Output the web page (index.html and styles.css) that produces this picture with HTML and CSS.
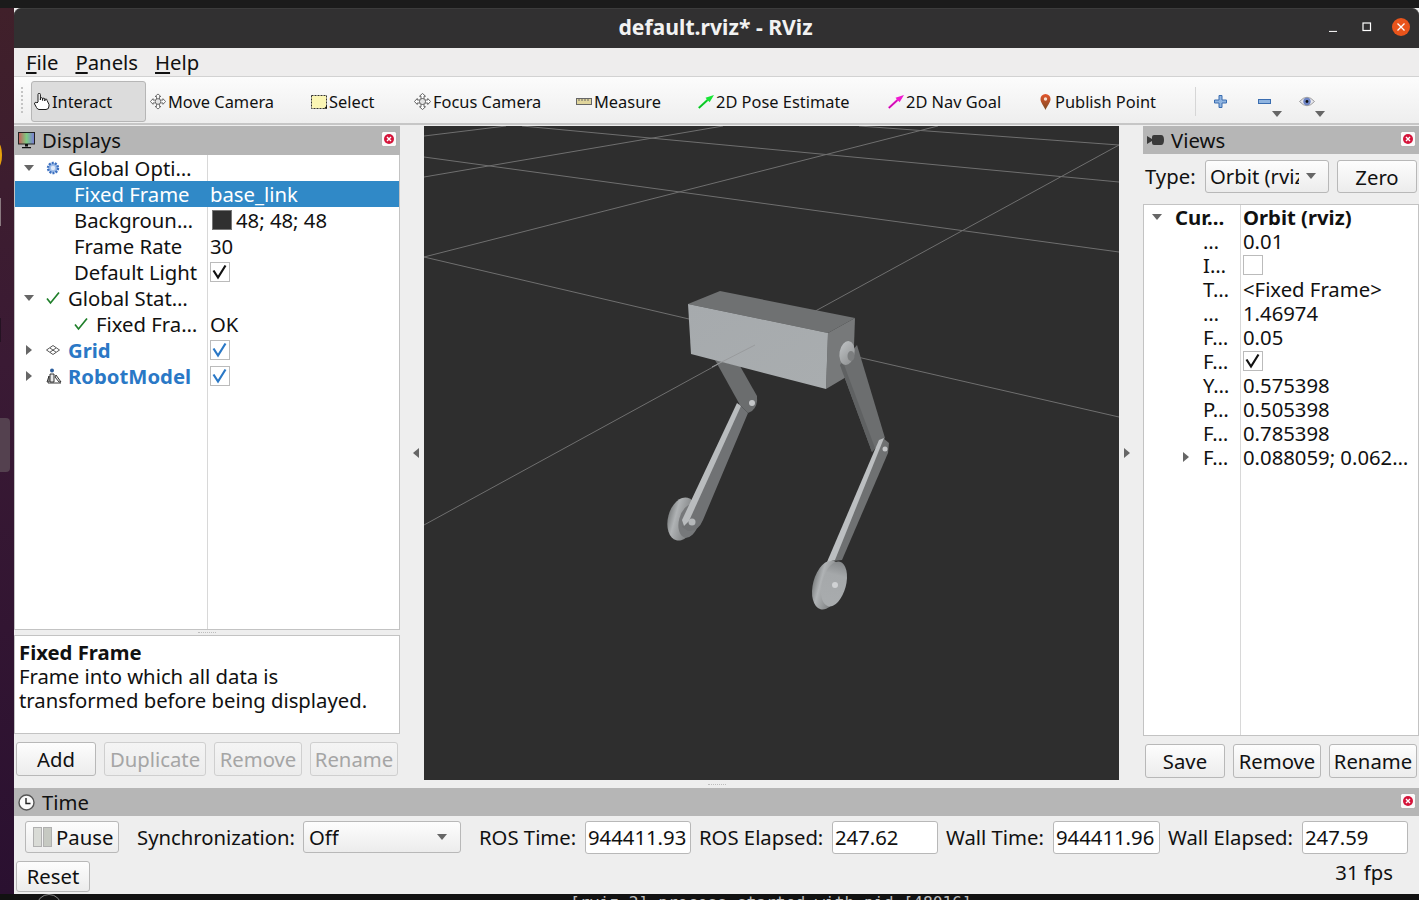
FILE: index.html
```html
<!DOCTYPE html>
<html lang="en">
<head>
<meta charset="utf-8">
<title>default.rviz* - RViz</title>
<link rel="stylesheet" href="styles.css">
</head>
<body>
<svg class="defs" width="0" height="0" aria-hidden="true">
  <defs>
    <symbol id="close" viewBox="0 0 16 16">
      <rect x="0.5" y="0.5" width="15" height="15" rx="2" fill="#fafafa" stroke="#9a9a9a" stroke-width="0.6"/>
      <circle cx="8" cy="8" r="5" fill="#d5143a"/>
      <path d="M6 6l4 4M10 6l-4 4" stroke="#fff" stroke-width="1.4"/>
    </symbol>
    <symbol id="tick" viewBox="0 0 20 20">
      <path d="M3.500 8.500L8 15.500L15.500 3.500" fill="none" stroke="currentColor" stroke-width="2.200"/>
    </symbol>
    <symbol id="greencheck" viewBox="0 0 14 14">
      <path d="M1 7.500l3.500 4.500L13 1.500" fill="none" stroke="#1f7f2a" stroke-width="1.700"/>
    </symbol>
    <symbol id="crosshair" viewBox="0 0 17 17">
      <path d="M8.500 .5l3 2.700H10v2.800H7V3.200H5.500zM8.500 16.500l3-2.700H10v-2.800H7v2.800H5.500zM.5 8.500l2.700-3V7H6v3H3.200v1.500zM16.500 8.500l-2.700-3V7H11v3h2.800v1.500z" fill="#fff" stroke="#444" stroke-width=".8"/>
      <circle cx="8.500" cy="8.500" r="3" fill="#e4e4e4" stroke="#555" stroke-width=".8"/>
    </symbol>
  </defs>
</svg>

<div class="desktop">
  <div class="topstrip"></div>
  <div class="middle">
    <aside class="launcher">
      <span class="dock-a"></span><span class="dock-b"></span><span class="dock-c"></span><span class="dock-d"></span>
    </aside>
    <div class="window">
      <header class="titlebar">
        <span class="title">default.rviz* - RViz</span>
        <div class="wm">
          <svg class="wm-min" width="10" height="10" viewBox="0 0 10 10"><path d="M1 9.500h8" stroke="#eee" stroke-width="1.200"/></svg>
          <svg class="wm-max" width="10" height="10" viewBox="0 0 10 10"><rect x="1" y="1" width="7.500" height="7.500" fill="none" stroke="#fff" stroke-width="1.200"/></svg>
          <svg class="wm-close" width="18" height="18" viewBox="0 0 18 18"><circle cx="9" cy="9" r="9" fill="#e9541b"/><path d="M5.500 5.500l7 7M12.500 5.500l-7 7" stroke="#fff" stroke-width="1.300"/></svg>
        </div>
      </header>

      <nav class="menubar">
        <span class="menu"><u>F</u>ile</span>
        <span class="menu"><u>P</u>anels</span>
        <span class="menu"><u>H</u>elp</span>
      </nav>

      <div class="toolbar">
        <span class="grip"></span>
        <div class="tools">
          <div class="tool active">
            <svg width="16" height="17" viewBox="0 0 16 17"><path d="M4 9V1.500a1.200 1.200 0 0 1 2.400 0V7V5.800a1.100 1.100 0 0 1 2.200 0V7.500V6.300a1.100 1.100 0 0 1 2.200 0V8V7a1.100 1.100 0 0 1 2.200 0.300L15 11.500V13q0 3.500-3 3.500H5q-1.500 0-2.500-2L.6 11c-.6-1.500 1.400-2.500 2.400-1z" fill="#fff" stroke="#1a1a1a" stroke-width="1"/></svg>
            <span>Interact</span>
          </div>
          <div class="tool"><svg width="16" height="17"><use href="#crosshair"/></svg><span>Move Camera</span></div>
          <div class="tool">
            <svg width="16" height="14" viewBox="0 0 16 14"><rect x=".5" y=".5" width="15" height="13" fill="#fbf6b4" stroke="#333" stroke-dasharray="2 1"/><path d="M13 13.500h3v-3z" fill="#111"/></svg>
            <span>Select</span>
          </div>
          <div class="tool"><svg width="17" height="17"><use href="#crosshair"/></svg><span>Focus Camera</span></div>
          <div class="tool">
            <svg width="16" height="7" viewBox="0 0 16 7"><rect x=".5" y=".5" width="15" height="6" fill="#e0d59c" stroke="#666"/><path d="M3 1v2M6 1v2M9 1v2M12 1v2" stroke="#666"/></svg>
            <span>Measure</span>
          </div>
          <div class="tool">
            <svg width="16" height="14" viewBox="0 0 16 14"><path d="M16 0L7.500 2.800l1.300 1.500L0 12.200l1.500 1.500 8.800-7.900 1.300 1.500z" fill="#16e534"/><path d="M1 13L9 5.500" stroke="#0a8a1c" stroke-width=".7"/></svg>
            <span>2D Pose Estimate</span>
          </div>
          <div class="tool">
            <svg width="16" height="14" viewBox="0 0 16 14"><path d="M16 0L7.500 2.800l1.300 1.500L0 12.200l1.500 1.500 8.800-7.900 1.300 1.500z" fill="#f01ad0"/><path d="M1 13L9 5.500" stroke="#9a0a88" stroke-width=".7"/></svg>
            <span>2D Nav Goal</span>
          </div>
          <div class="tool pin">
            <svg width="11" height="16" viewBox="0 0 11 16"><defs><linearGradient id="pinfill" x1="0" y1="0" x2="0" y2="1"><stop offset="0" stop-color="#e4552c"/><stop offset="1" stop-color="#7a4a22"/></linearGradient></defs><path d="M5.500 0a5 5 0 0 1 5 5.200C10.500 8.500 7 12 5.500 16 4 12 .5 8.500.5 5.200a5 5 0 0 1 5-5.200z" fill="url(#pinfill)"/><circle cx="5.500" cy="5" r="1.700" fill="#f6e0d0"/></svg>
            <span>Publish Point</span>
          </div>
        </div>
        <span class="sep"></span>
        <div class="actions">
          <svg class="act-plus" width="13" height="13" viewBox="0 0 13 13"><path d="M5 .5h3v4.500h4.500v3H8v4.500H5V8H.5V5H5z" fill="#8fb4e0" stroke="#3a6db0"/></svg>
          <svg class="act-minus" width="13" height="5" viewBox="0 0 13 5"><rect x=".5" y=".5" width="12" height="4" fill="#8fb4e0" stroke="#3a6db0"/></svg>
          <span class="arrow-down act-a1"></span>
          <svg class="act-eye" width="16" height="11" viewBox="0 0 16 11"><path d="M.5 5.500Q8-3 15.500 5.500Q8 14 .5 5.500z" fill="#e8e8ee" stroke="#888" stroke-width=".8"/><circle cx="8" cy="5.500" r="3.700" fill="#6d84c4"/><circle cx="8" cy="5.500" r="1.400" fill="#111"/></svg>
          <span class="arrow-down act-a2"></span>
        </div>
      </div>

      <main class="workspace">
        <section class="displays">
          <div class="dock-title">
            <svg width="17" height="17" viewBox="0 0 17 17"><defs><linearGradient id="rainbow" x1="0" y1="0" x2="1" y2="0"><stop offset="0" stop-color="#c85a5a"/><stop offset=".5" stop-color="#7ecb82"/><stop offset="1" stop-color="#7a7ad8"/></linearGradient></defs><rect x=".5" y=".5" width="16" height="11.500" fill="url(#rainbow)" stroke="#222"/><path d="M7 12h3v2.500H7zM4 15h9v1.200H4z" fill="#111"/></svg>
            <span class="dock-name">Displays</span>
            <svg class="dock-close" width="16" height="16"><use href="#close"/></svg>
          </div>
          <div class="tree disp-tree">
            <div class="row"><div class="name"><span class="arrow-down twist"></span>
              <svg class="ico" width="14" height="14" viewBox="0 0 14 14"><circle cx="7" cy="7" r="5" fill="#9dbce8" stroke="#3c70c0" stroke-width="2.400" stroke-dasharray="2 1.100"/><circle cx="7" cy="7" r="2.200" fill="#dfe9f8"/></svg>
              <span>Global Opti…</span></div><div class="val"></div></div>
            <div class="row selected"><div class="name lvl2">Fixed Frame</div><div class="val">base_link</div></div>
            <div class="row"><div class="name lvl2">Backgroun…</div><div class="val"><i class="swatch"></i>48; 48; 48</div></div>
            <div class="row"><div class="name lvl2">Frame Rate</div><div class="val">30</div></div>
            <div class="row"><div class="name lvl2">Default Light</div><div class="val"><span class="check"><svg width="20" height="20"><use href="#tick"/></svg></span></div></div>
            <div class="row"><div class="name"><span class="arrow-down twist"></span>
              <svg class="ico" width="14" height="14"><use href="#greencheck"/></svg>
              <span>Global Stat…</span></div><div class="val"></div></div>
            <div class="row"><div class="name lvl2b"><svg class="ico" width="14" height="14"><use href="#greencheck"/></svg><span>Fixed Fra…</span></div><div class="val">OK</div></div>
            <div class="row"><div class="name"><span class="arrow-right twist-r"></span>
              <svg class="ico" width="14" height="10" viewBox="0 0 14 10"><path d="M7 .5L13.500 5 7 9.500.5 5zM4 3l6 4.200M10 3L4 7.200" fill="#fff" stroke="#444" stroke-width=".9"/></svg>
              <b class="link">Grid</b></div><div class="val"><span class="check on"><svg width="20" height="20"><use href="#tick"/></svg></span></div></div>
            <div class="row"><div class="name"><span class="arrow-right twist-r"></span>
              <svg class="ico ico-wide" width="16" height="16" viewBox="0 0 16 16"><circle cx="6" cy="2.500" r="2" fill="#2b5d9c"/><path d="M4 6h4v8H4zM1 14l2-6v6zM9 9l4 5h2l-5-7zM2 15h13" fill="#e8e8e8" stroke="#222" stroke-width=".9"/></svg>
              <b class="link">RobotModel</b></div><div class="val"><span class="check on"><svg width="20" height="20"><use href="#tick"/></svg></span></div></div>
            <div class="row filler"><div class="name"></div><div class="val"></div></div>
          </div>
          <div class="handle"><span class="dots"></span></div>
          <div class="help">
            <b>Fixed Frame</b>
            <span>Frame into which all data is</span>
            <span>transformed before being displayed.</span>
          </div>
          <div class="btn-row disp-btns">
            <button class="btn w-add">Add</button>
            <button class="btn w-dup" disabled>Duplicate</button>
            <button class="btn w-rem" disabled>Remove</button>
            <button class="btn w-ren" disabled>Rename</button>
          </div>
        </section>

        <div class="splitter split-l"><span class="arrow-left"></span></div>

        <section class="center">
          <div class="viewport">
            <svg class="scene" width="695" height="654" viewBox="424 126 695 654" role="img" aria-label="3D view of a two-legged robot on a grid">
              <defs>
                <linearGradient id="frontface" x1="0" y1="0" x2="1" y2="1"><stop offset="0" stop-color="#a6aaad"/><stop offset="1" stop-color="#a9adaf"/></linearGradient>
                <linearGradient id="rimL" x1="0" y1="0" x2="1" y2="0"><stop offset="0" stop-color="#7f8283"/><stop offset=".25" stop-color="#b0b3b5"/><stop offset="1" stop-color="#6b6d6e"/></linearGradient>
                <linearGradient id="hubG" x1="0" y1="0" x2="1" y2="1"><stop offset="0" stop-color="#c0c3c5"/><stop offset="1" stop-color="#8d8f90"/></linearGradient>
                <linearGradient id="faceR" x1="0" y1="0" x2="0" y2="1"><stop offset="0" stop-color="#85888a"/><stop offset=".3" stop-color="#a5a8aa"/><stop offset="1" stop-color="#a9acae"/></linearGradient>
              </defs>
              <g class="grid-lines">
                <path d="M424 136L506 126"/>
                <path d="M424 177L723 126"/>
                <path d="M424 257L938 126"/>
                <path d="M424 525L1119 145"/>
                <path d="M522 126L1119 182"/>
                <path d="M859 126L1119 145"/>
                <path d="M424 157L1119 252"/>
                <path d="M424 257L689 319"/>
                <path d="M853 356L1119 417"/>
              </g>
              <!-- left leg -->
              <ellipse cx="682" cy="519" rx="14" ry="22" transform="rotate(15 682 519)" fill="url(#rimL)"/>
              <ellipse cx="689" cy="521" rx="10" ry="17" transform="rotate(15 689 521)" fill="#76787a"/>
              <path d="M739 404L748 413L703 520Q698 532 688 531L682 527Z" fill="#707274"/>
              <path d="M737 403L741 406L689 521L684 526L682 520Z" fill="#b9bcbe"/>
              <circle cx="692" cy="522" r="3.500" fill="#b5b8ba"/>
              <path d="M715 360L740 366L757 396Q758 406 752 411L748 413L740 405Z" fill="#6b6d6e"/>
              <circle cx="752" cy="403" r="3" fill="#c4c6c8"/>
              <!-- body -->
              <path d="M688 304L720 291L855 318L828 333Z" fill="#6f7172"/>
              <path d="M828 333L855 318L853 373L826 389Z" fill="#77797a"/>
              <path d="M688 304L828 333L826 389L691 354Z" fill="url(#frontface)"/>
              <path d="M712 367L755 345" stroke="#999b9d" stroke-width="1" fill="none"/>
              <!-- right leg -->
              <path d="M840 365L857 345L885 438L872 452Z" fill="#6c6e6f"/>
              <path d="M840 365L843 362L875 448L872 452Z" fill="#5f6162"/>
              <ellipse cx="847" cy="353" rx="7.500" ry="12" transform="rotate(10 847 353)" fill="url(#hubG)"/>
              <ellipse cx="851" cy="356" rx="3.500" ry="5" fill="#7c7e7f"/>
              <ellipse cx="827" cy="585" rx="14" ry="25" transform="rotate(15 827 585)" fill="url(#rimL)"/>
              <ellipse cx="834" cy="584" rx="12" ry="23" transform="rotate(15 834 584)" fill="url(#faceR)"/>
              <path d="M883 438L889 443L888 453L842 560L833 561Z" fill="#6f7172"/>
              <path d="M879 440L884 438L835 560L827 562Z" fill="#bcbfc1"/>
              <circle cx="885" cy="449" r="2.500" fill="#c4c6c8"/>
              <circle cx="835" cy="585" r="3" fill="#d0d2d4"/>
            </svg>
          </div>
          <div class="handle center-handle"><span class="dots"></span></div>
        </section>

        <div class="splitter split-r"><span class="arrow-right"></span></div>

        <section class="views">
          <div class="dock-title views-title">
            <svg width="17" height="10" viewBox="0 0 17 10"><path d="M0 1l5 3V2q0-2 2-2h7q3 0 3 5t-3 5H7q-2 0-2-2V6L0 9z" fill="#3a3a3a"/></svg>
            <span class="dock-name">Views</span>
            <svg class="dock-close" width="16" height="16"><use href="#close"/></svg>
          </div>
          <div class="type-row">
            <label class="type-label">Type:</label>
            <div class="combo type-combo"><span class="combo-text">Orbit (rviz)</span><span class="arrow-down"></span></div>
            <button class="btn zero">Zero</button>
          </div>
          <div class="tree view-tree">
            <div class="vrow"><div class="vname strong"><span class="arrow-down vtwist"></span>Cur…</div><div class="vval strong">Orbit (rviz)</div></div>
            <div class="vrow"><div class="vname">…</div><div class="vval">0.01</div></div>
            <div class="vrow"><div class="vname">I…</div><div class="vval"><span class="check"></span></div></div>
            <div class="vrow"><div class="vname">T…</div><div class="vval">&lt;Fixed Frame&gt;</div></div>
            <div class="vrow"><div class="vname">…</div><div class="vval">1.46974</div></div>
            <div class="vrow"><div class="vname">F…</div><div class="vval">0.05</div></div>
            <div class="vrow"><div class="vname">F…</div><div class="vval"><span class="check"><svg width="20" height="20"><use href="#tick"/></svg></span></div></div>
            <div class="vrow"><div class="vname">Y…</div><div class="vval">0.575398</div></div>
            <div class="vrow"><div class="vname">P…</div><div class="vval">0.505398</div></div>
            <div class="vrow"><div class="vname">F…</div><div class="vval">0.785398</div></div>
            <div class="vrow"><div class="vname"><span class="arrow-right vtwist-r"></span>F…</div><div class="vval">0.088059; 0.062…</div></div>
            <div class="vrow filler"><div class="vname"></div><div class="vval"></div></div>
          </div>
          <div class="btn-row view-btns">
            <button class="btn w-save">Save</button>
            <button class="btn w-rem2">Remove</button>
            <button class="btn w-ren2">Rename</button>
          </div>
        </section>
      </main>

      <section class="timepanel">
        <div class="dock-title time-title">
          <svg width="17" height="17" viewBox="0 0 17 17"><circle cx="8.500" cy="8.500" r="7.500" fill="#fafafa" stroke="#555" stroke-width="1.400"/><path d="M8 4v5.500h4.500" fill="none" stroke="#222" stroke-width="1.400"/></svg>
          <span class="dock-name">Time</span>
          <svg class="dock-close" width="16" height="16"><use href="#close"/></svg>
        </div>
        <div class="time-row">
          <button class="btn pause"><svg width="19" height="20" viewBox="0 0 19 20"><rect x=".5" y=".5" width="8" height="19" fill="#d9dbd6" stroke="#b0b0b0"/><rect x="10.500" y=".5" width="8" height="19" fill="#c6c9c2" stroke="#b0b0b0"/></svg><span>Pause</span></button>
          <span class="tlabel sync">Synchronization:</span>
          <div class="combo time-combo"><span class="combo-text">Off</span><span class="arrow-down"></span></div>
          <span class="tlabel sync">ROS Time:</span>
          <div class="field">944411.93</div>
          <span class="tlabel">ROS Elapsed:</span>
          <div class="field">247.62</div>
          <span class="tlabel">Wall Time:</span>
          <div class="field">944411.96</div>
          <span class="tlabel">Wall Elapsed:</span>
          <div class="field">247.59</div>
        </div>
        <div class="status-row">
          <button class="btn reset">Reset</button>
          <span class="fps">31 fps</span>
        </div>
      </section>
    </div>
  </div>
  <div class="terminal"><span class="term-ring"></span><span class="term-text">[rviz-2] process started with pid [48016]</span></div>
</div>
</body>
</html>
```

FILE: styles.css
```css
* { box-sizing: border-box; }
html, body { margin: 0; padding: 0; }
body {
  width: 1419px;
  height: 900px;
  overflow: hidden;
  background: #111;
  font-family: "Noto Sans", "Open Sans", sans-serif;
  font-size: 20.300px;
  color: #111;
}
.defs { position: absolute; }
.desktop { display: flex; flex-direction: column; height: 900px; position: relative; }
.topstrip { height: 8px; background: #1b1b1b; }
.middle { display: flex; height: 886px; }

.launcher {
  width: 14px;
  position: relative;
  background: linear-gradient(180deg, #40202a 0%, #3a1a34 40%, #2a1030 100%);
}
.dock-a { position: absolute; left: -6px; top: 135px; width: 8px; height: 24px; border-radius: 50%; background: #e8a20c; }
.dock-b { position: absolute; left: 0; top: 190px; width: 1px; height: 28px; background: #8a7a80; }
.dock-c { position: absolute; left: 0; top: 310px; width: 1px; height: 24px; background: #241222; }
.dock-d { position: absolute; left: 0; top: 410px; width: 10px; height: 54px; border-radius: 0 4px 4px 0; background: #54414f; }

.window { flex: 1; display: flex; flex-direction: column; background: #eeeeee; min-width: 0; }

.titlebar {
  height: 40px;
  background: #313031;
  border-top: 1px solid #3c3c3c;
  border-radius: 7px 7px 0 0;
  display: flex;
  align-items: center;
  justify-content: center;
  position: relative;
  flex: none;
}
.title { color: #f2f2f2; font-weight: 700; font-size: 21.200px; line-height: 36px; margin: -4px 2px 0 0; }
.wm { position: absolute; right: 9px; top: 9px; display: flex; align-items: center; }
.wm-min { margin-right: 24px; }
.wm-max { margin-right: 20px; }

.menubar { height: 28px; background: #eeeded; display: flex; align-items: center; padding: 0 0 0 12px; gap: 17px; flex: none; }
.menu { line-height: 26px; }

.toolbar {
  height: 49px;
  border-top: 1px solid #d2d2d2;
  border-bottom: 2px solid #c6c6c6;
  background: linear-gradient(180deg, #fcfcfc, #eeeeee);
  display: flex;
  align-items: flex-start;
  font-size: 16.400px;
  flex: none;
}
.grip { width: 2px; height: 26px; margin: 10px 8px 0 7px; border-left: 2px dotted #c4c4c4; }
.tools {
  display: grid;
  grid-template-columns: 115px 164px 103px 162px 122px 190px 152px 156px;
  height: 41px;
  margin-top: 4px;
}
.tool { display: flex; align-items: center; gap: 2px; padding-left: 4px; white-space: nowrap; height: 41px; }
.tool.active { background: #dcdcdc; border: 1px solid #b6b6b6; border-radius: 3px; padding-left: 2px; }
.tool svg { flex: none; }
.tool:nth-child(3), .tool:nth-child(4), .tool:nth-child(5), .tool:nth-child(6), .tool:nth-child(7) { padding-left: 1px; }
.tool.pin { gap: 4px; padding-left: 1px; }
.sep { width: 1px; height: 29px; background: #d6d6d6; margin-top: 10px; }
.actions { position: relative; flex: 1; height: 41px; margin-top: 4px; }
.act-plus { position: absolute; left: 18px; top: 14px; }
.act-minus { position: absolute; left: 62px; top: 18px; }
.act-eye { position: absolute; left: 103px; top: 15px; }
.act-a1 { position: absolute; left: 76px; top: 30px; }
.act-a2 { position: absolute; left: 119px; top: 30px; }

.arrow-down { display: inline-block; width: 0; height: 0; border-left: 5.500px solid transparent; border-right: 5.500px solid transparent; border-top: 6px solid #666; flex: none; }
.arrow-right { display: inline-block; width: 0; height: 0; border-top: 5.500px solid transparent; border-bottom: 5.500px solid transparent; border-left: 6px solid #666; }
.arrow-left { display: inline-block; width: 0; height: 0; border-top: 5.500px solid transparent; border-bottom: 5.500px solid transparent; border-right: 6px solid #666; }

.workspace { height: 663px; display: flex; padding-top: 1px; flex: none; }
.displays { width: 386px; display: flex; flex-direction: column; }
.center { width: 695px; display: flex; flex-direction: column; }
.views { flex: 1; display: flex; flex-direction: column; min-width: 0; }

.splitter { width: 24px; height: 654px; display: flex; align-items: center; justify-content: center; }
.split-l { padding-left: 8px; }
.split-r { padding-right: 8px; }
.viewport { height: 654px; background: #2e2e2e; }
.scene { display: block; }
.grid-lines path { stroke: #6f6f6f; stroke-width: 1; fill: none; }

.dock-title { height: 29px; background: #b6b6b6; display: flex; align-items: center; padding-left: 4px; position: relative; flex: none; }
.views-title { height: 28px; padding-left: 4px; }
.time-title { height: 28px; }
.dock-name { margin-left: 7px; line-height: 29px; }
.dock-close { position: absolute; right: 3px; top: 5px; }

.tree { background: #fff; border: 1px solid #c3c3c3; display: flex; flex-direction: column; }
.disp-tree { height: 475px; border-top: 0; }
.row { height: 26px; display: grid; grid-template-columns: 193px 1fr; line-height: 26px; flex: none; white-space: nowrap; }
.row.filler { flex: 1; }
.row.selected { background: #3089c7; color: #fff; }
.name { display: flex; align-items: center; padding-left: 9px; border-right: 1px solid #d8d8d8; position: relative; height: 100%; }
.row.selected .name { border-right-color: #3089c7; }
.lvl2 { padding-left: 59px; }
.lvl2b { padding-left: 59px; }
.twist { margin-right: 12px; }
.twist-r { flex: none; margin-left: 2px; margin-right: 14px; }
.ico { flex: none; margin-right: 8px; }
.ico-wide { margin-right: 6px; }
.val { padding-left: 2px; display: flex; align-items: center; }
.link { color: #2a78c6; font-weight: 700; }
.swatch { display: inline-block; width: 20px; height: 20px; background: #303030; border: 1px solid #777; margin: 0 4px 0 2px; }
.check { display: block; width: 20px; height: 20px; background: #fff; border: 1px solid #bbb; color: #111; flex: none; }
.check svg { display: block; margin: -1px; }
.check.on { color: #2a78c6; }

.handle { height: 5px; display: flex; align-items: center; justify-content: center; flex: none; }
.dots { width: 18px; border-top: 1px dotted #bdbdbd; }
.center-handle { height: 8px; justify-content: flex-start; padding-left: 284px; }
.help { height: 99px; background: #fff; border: 1px solid #c3c3c3; padding: 4px 4px; display: flex; flex-direction: column; line-height: 24px; white-space: nowrap; flex: none; }
.btn-row { display: flex; flex: none; }
.disp-btns { margin-top: 8px; margin-left: 2px; gap: 8px; }
.view-btns { margin-top: 8px; margin-left: 2px; gap: 8px; }
.btn {
  height: 34px;
  padding: 0;
  border: 1px solid #b8b8b8;
  border-radius: 3px;
  background: linear-gradient(180deg, #fdfdfd, #ececec);
  font: inherit;
  color: #111;
  white-space: nowrap;
}
.btn[disabled] { color: #a5a5a5; border-color: #cfcfcf; background: linear-gradient(180deg, #f4f4f4, #ececec); }
.w-add { width: 80px; }
.w-dup { width: 102px; }
.w-rem { width: 88px; }
.w-ren { width: 88px; }
.w-save { width: 80px; }
.w-rem2 { width: 88px; }
.w-ren2 { width: 88px; }

.type-row { height: 50px; padding: 6px 0 11px 2px; display: flex; flex: none; align-items: stretch; }
.type-label { width: 60px; line-height: 33px; }
.combo {
  border: 1px solid #b8b8b8;
  border-radius: 3px;
  background: linear-gradient(180deg, #fdfdfd, #ececec);
  display: flex;
  align-items: center;
  justify-content: space-between;
  padding: 0 13px 0 5px;
  height: 32px;
}
.combo-text { white-space: nowrap; overflow: hidden; }
.time-combo { padding-bottom: 1px; }
.type-combo { width: 124px; height: 33px; padding: 0 12px 2px 4px; }
.type-combo .combo-text { width: 89px; }
.zero { width: 80px; height: 33px; margin-left: 8px; }

.view-tree { height: 532px; }
.vrow { height: 24px; display: grid; grid-template-columns: 97px 1fr; line-height: 24px; flex: none; white-space: nowrap; }
.vrow.filler { flex: 1; }
.vname { padding-left: 59px; border-right: 1px solid #d8d8d8; position: relative; height: 100%; }
.vname.strong { padding-left: 31px; }
.strong { font-weight: 700; }
.vval { padding-left: 2px; display: flex; align-items: center; }
.vtwist { position: absolute; left: 8px; top: 9px; }
.vtwist-r { position: absolute; left: 39px; top: 7px; }

.timepanel { height: 106px; display: flex; flex-direction: column; flex: none; }
.time-row {
  display: grid;
  grid-template-columns: 94px 184px 158px 124px 106px 141px 106px 115px 107px 142px 106px;
  height: 32px;
  margin-top: 5px;
  margin-left: 11px;
}
.pause { height: 32px; display: flex; align-items: center; padding-left: 7px; gap: 4px; }
.tlabel { line-height: 33px; padding-left: 8px; white-space: nowrap; }
.tlabel.sync { padding-left: 18px; }
.field { background: #fff; border: 1px solid #b8b8b8; border-radius: 3px; line-height: 31px; padding-left: 2px; white-space: nowrap; }
.status-row { display: flex; justify-content: space-between; margin-top: 8px; margin-left: 2px; }
.reset { width: 74px; height: 31px; padding-bottom: 2px; }
.fps { margin-right: 26px; line-height: 22px; }

.terminal { height: 6px; margin-left: 14px; background: #121212; overflow: hidden; position: relative; flex: none; }
.term-text { position: absolute; left: 556px; top: 1px; font-family: "DejaVu Sans Mono", monospace; font-size: 16.300px; line-height: 16px; color: #bdbdbd; white-space: pre; }
.term-ring { position: absolute; left: 22px; top: 0; width: 26px; height: 26px; border: 1px solid #888; border-radius: 50%; }
```
